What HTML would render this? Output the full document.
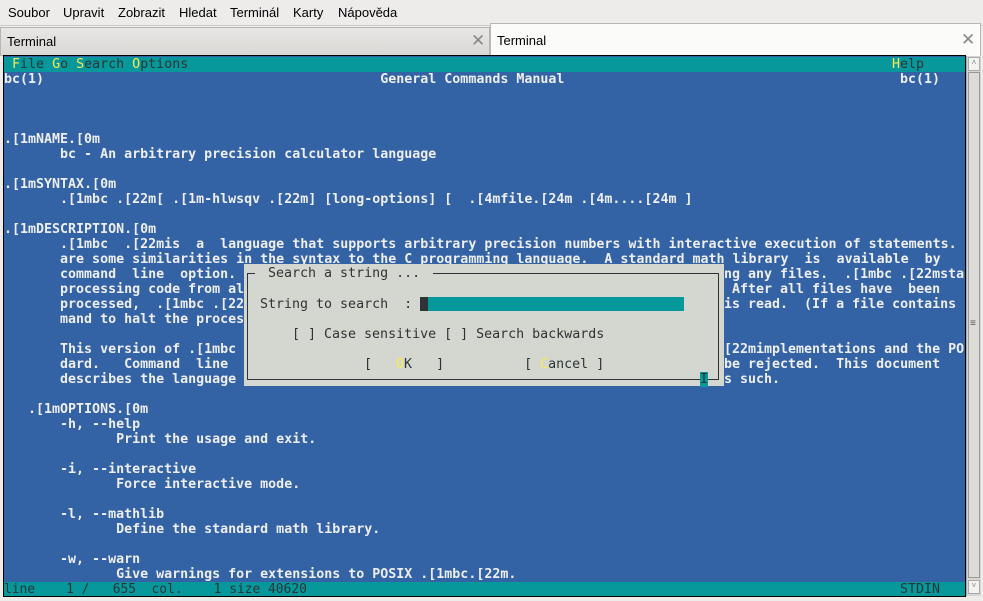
<!DOCTYPE html>
<html><head><meta charset="utf-8"><style>
*{margin:0;padding:0;box-sizing:border-box}
body{width:983px;height:601px;overflow:hidden;background:#edeceb;font-family:"Liberation Sans",sans-serif;position:relative}
.menu{position:absolute;left:0;top:0;width:983px;height:25px;font-size:13px;color:#000}
.menu span{position:absolute;top:5px}
.tab{position:absolute;top:27px;height:29px;font-size:13px;border:1px solid #b8b6b2}
.tab .t{position:absolute;top:6px}
.tab .x{position:absolute;top:3px;font-size:17px;color:#888}
#term{position:absolute;left:3px;top:55px;width:963px;height:542px;border:1px solid #000;background:#3363a5;overflow:hidden;padding-top:1px}
.r{position:relative;height:15px;line-height:15px;white-space:pre;font-family:"DejaVu Sans Mono","Liberation Mono",monospace;font-size:13.3px;font-weight:bold;color:#eeeeec}
.r .f{position:absolute;left:720px;top:0}
.teal{background:#06989a;color:#2e3436;font-weight:normal}
.y{color:#fce94f}
#dlg{position:absolute;left:244px;top:264px;width:480px;height:122px;background:#d3d7cf;font-family:"DejaVu Sans Mono",monospace;font-size:13.3px;color:#2e3436}
#dlg .b{position:absolute;left:3px;top:9px;width:472px;height:107px;border:1px solid #2e3436}
#dlg .l{position:absolute;white-space:pre;line-height:15px}
.sb{position:absolute;left:966px;top:56px;width:15px;height:540px;background:#d6d5d3;border-left:1px solid #aaa}
</style></head><body>
<div class="menu">
<span style="left:8px">Soubor</span><span style="left:63px">Upravit</span><span style="left:118px">Zobrazit</span><span style="left:179px">Hledat</span><span style="left:230px">Terminál</span><span style="left:293px">Karty</span><span style="left:338px">Nápověda</span>
</div>
<div style="position:absolute;left:0;top:25px;width:983px;height:1px;background:#cfcdca"></div>
<div class="tab" style="left:0;width:490px;background:linear-gradient(#e8e7e5,#d9d8d5)"><span class="t" style="left:6px">Terminal</span><span class="x" style="left:470px">✕</span></div>
<div class="tab" style="left:490px;top:23px;height:33px;width:491px;background:#fbfbfa;border-bottom:none"><span class="t" style="left:6px;top:9px">Terminal</span><span class="x" style="left:470px;top:6px">✕</span></div>
<div id="term">
<div class="r teal"> <span class="y">F</span>ile <span class="y">G</span>o <span class="y">S</span>earch <span class="y">O</span>ptions<span class="f" style="left:888px"><span class="y">H</span>elp</span></div>
<div class="r">bc(1)                                          General Commands Manual<span class="f" style="left:896px">bc(1)</span></div>
<div class="r"> </div>
<div class="r"> </div>
<div class="r"> </div>
<div class="r">.[1mNAME.[0m</div>
<div class="r">       bc - An arbitrary precision calculator language</div>
<div class="r"> </div>
<div class="r">.[1mSYNTAX.[0m</div>
<div class="r">       .[1mbc .[22m[ .[1m-hlwsqv .[22m] [long-options] [  .[4mfile.[24m .[4m....[24m ]</div>
<div class="r"> </div>
<div class="r">.[1mDESCRIPTION.[0m</div>
<div class="r">       .[1mbc  .[22mis  a  language that supports arbitrary precision numbers with interactive execution of statements.  There</div>
<div class="r">       are some similarities in the syntax to the C programming language.  A standard math library  is  available  by</div>
<div class="r">       command  line  option.<span class="f">ng any files.  .[1mbc .[22msta</span></div>
<div class="r">       processing code from al<span class="f"> After all files have  been</span></div>
<div class="r">       processed,  .[1mbc .[22<span class="f">is read.  (If a file contains</span></div>
<div class="r">       mand to halt the proces</div>
<div class="r"> </div>
<div class="r">       This version of .[1mbc<span class="f">[22mimplementations and the POS</span></div>
<div class="r">       dard.   Command  line<span class="f">be rejected.  This document</span></div>
<div class="r">       describes the language<span class="f">s such.</span></div>
<div class="r"> </div>
<div class="r">   .[1mOPTIONS.[0m</div>
<div class="r">       -h, --help</div>
<div class="r">              Print the usage and exit.</div>
<div class="r"> </div>
<div class="r">       -i, --interactive</div>
<div class="r">              Force interactive mode.</div>
<div class="r"> </div>
<div class="r">       -l, --mathlib</div>
<div class="r">              Define the standard math library.</div>
<div class="r"> </div>
<div class="r">       -w, --warn</div>
<div class="r">              Give warnings for extensions to POSIX .[1mbc.[22m.</div>
<div class="r teal"><span style="display:inline-block;transform:scaleX(0.97);transform-origin:left">line    1 /   655  col.    1 size 40620</span><span class="f" style="left:896px">STDIN</span></div>
</div>
<div id="dlg">
<div class="b"></div>
<div class="l" style="left:11px;top:2px;background:#d3d7cf;padding:0 5px 0 5px"> Search a string ... </div>
<div class="l" style="left:16px;top:33px">String to search  :</div>
<div style="position:absolute;left:176px;top:33px;width:264px;height:14px;background:#06989a"></div>
<div style="position:absolute;left:176px;top:33px;width:8px;height:14px;background:#2e3436"></div>
<div class="l" style="left:48px;top:63px">[ ] Case sensitive [ ] Search backwards</div>
<div class="l" style="left:120px;top:93px">[   <span class="y">O</span>K   ]          [ <span class="y">C</span>ancel ]</div>
<div class="l" style="left:456px;top:108px;width:8px;height:15px;background:#06989a;text-align:center">I</div>
</div>
<div class="sb">
<div style="position:absolute;left:1px;top:1px;width:12px;height:14px;background:#f2f2f1;border:1px solid #aaa;font-size:8px;text-align:center;color:#888">˄</div>
<div style="position:absolute;left:1px;top:16px;width:12px;height:506px;background:#dcdbd8;border:1px solid #999"></div>
<div style="position:absolute;left:3px;top:262px;font-size:10px;color:#555">≡</div>
<div style="position:absolute;left:1px;top:524px;width:12px;height:14px;background:#f2f2f1;border:1px solid #aaa;font-size:8px;text-align:center;color:#888">˅</div>
</div>
</body></html>
